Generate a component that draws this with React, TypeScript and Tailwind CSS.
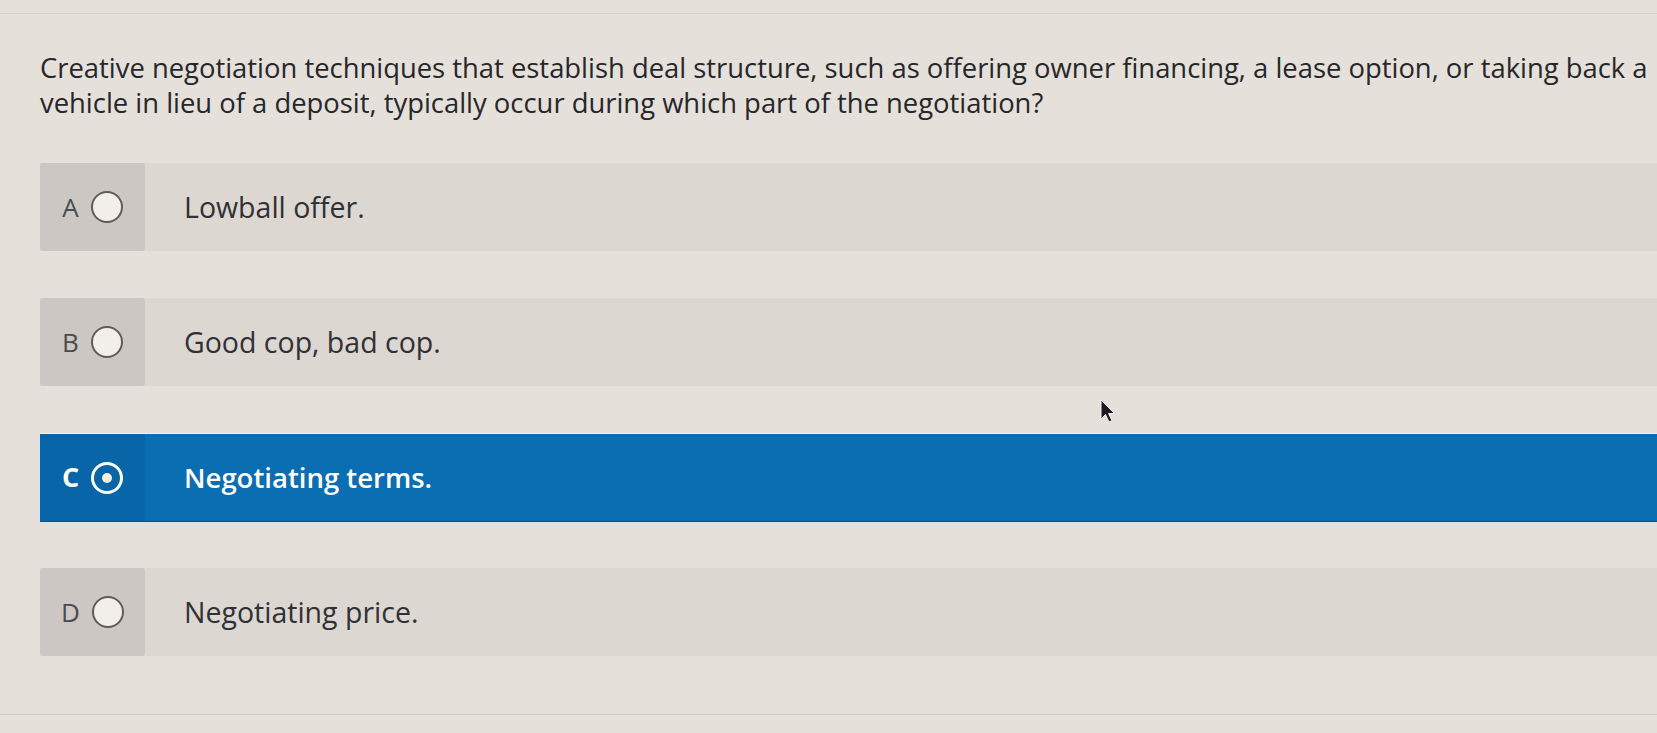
const options = [
  { letter: "A", text: "Lowball offer.", selected: false },
  { letter: "B", text: "Good cop, bad cop.", selected: false },
  { letter: "C", text: "Negotiating terms.", selected: true },
  { letter: "D", text: "Negotiating price.", selected: false },
];

function Radio({ selected }: { selected: boolean }) {
  if (selected) {
    return (
      <span className="w-[32px] h-[32px] rounded-full border-[3px] border-white flex items-center justify-center shrink-0">
        <span className="w-[10px] h-[10px] rounded-full bg-[#f4f0e0]" />
      </span>
    );
  }
  return <span className="w-[32px] h-[32px] rounded-full border-2 border-[#5f5c59] bg-[#f2efeb] shrink-0" />;
}

export default function App() {
  return (
    <div
      className="relative w-[1657px] h-[733px] overflow-hidden bg-[#e5e0d9] text-[#26272b]"
      style={{ fontFamily: '"Open Sans", "Noto Sans", sans-serif' }}
    >
      <div className="h-[14px] border-b border-[#d6d1ca]" />

      {/* question, second-to-last word runs off the right edge like the screen */}
      <div className="pl-[40px] pt-[36px] text-[27.4px] leading-[35px] whitespace-nowrap">
        <div>Creative negotiation techniques that establish deal structure, such as offering owner financing, a lease option, or taking back a</div>
        <div>vehicle in lieu of a deposit, typically occur during which part of the negotiation?</div>
      </div>

      <div className="flex flex-col gap-[47px] pl-[40px] pt-[43px]">
        {options.map((o) => (
          <div
            key={o.letter}
            className={
              o.selected
                ? "flex h-[88px] bg-[#0b6db2] text-white border-t border-[#f5f3f0] shadow-[0_1px_0_#0a4f85]"
                : "flex h-[88px] bg-[#dcd7d1]"
            }
          >
            <div
              className={
                o.selected
                  ? "w-[105px] flex items-center justify-center gap-[12px] bg-[#0765a8] rounded-l-[3px]"
                  : "w-[105px] flex items-center justify-center gap-[12px] bg-[#ccc7c2] rounded-[3px]"
              }
            >
              <span className={o.selected ? "text-[27px] font-bold text-white" : "text-[26px] text-[#4a4b51]"}>
                {o.letter}
              </span>
              <Radio selected={o.selected} />
            </div>
            <div
              className={
                o.selected
                  ? "flex items-center pl-[39px] text-[27.5px] font-semibold text-white"
                  : "flex items-center pl-[39px] text-[28.5px] text-[#303136]"
              }
            >
              {o.text}
            </div>
          </div>
        ))}
      </div>

      <div className="absolute left-0 right-0 top-[714px] border-t border-[#cfc9c2]" />

      <svg className="absolute left-[1099px] top-[399px]" width="18" height="26" viewBox="0 0 18 26">
        <path d="M2 1 L2 20 L6.5 15.5 L10 23 L13 21.5 L9.5 14.5 L15.5 14.5 Z" fill="#1d1a24" stroke="#f4f1ec" strokeWidth="1" />
      </svg>
    </div>
  );
}
